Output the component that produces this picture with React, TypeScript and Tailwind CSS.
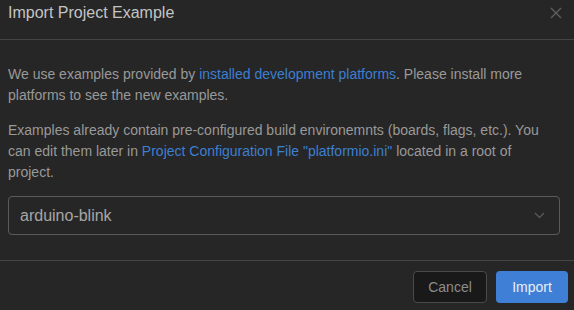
import React from "react";

export default function App() {
  return (
    <div
      className="w-[574px] h-[310px] bg-[#262626] overflow-hidden flex flex-col"
      style={{ fontFamily: '"Liberation Sans", Arial, sans-serif' }}
    >
      <div className="h-10 shrink-0 flex items-start justify-between border-b border-[#444444]">
        <div className="pl-2 pt-[1px] text-[16px] leading-6 text-[#c4c4c4]">Import Project Example</div>
        <div className="pr-[12px] pt-[7px]">
          <svg width="12" height="12" viewBox="0 0 12 12" fill="none">
            <path d="M1 1 L11 11 M11 1 L1 11" stroke="#5f5f5f" strokeWidth="1.4" />
          </svg>
        </div>
      </div>
      <div className="px-2 pt-[24px] pb-[25px] text-[14px] leading-[21px] text-[#999999] border-b border-[#444444]">
        <p className="mb-[14px] pr-[20px]">
          We use examples provided by{" "}
          <span className="text-[#3d7fd1]">installed development platforms</span>. Please install more
          platforms to see the new examples.
        </p>
        <p className="pr-[20px]">
          Examples already contain pre-configured build environemnts (boards, flags, etc.). You can edit
          them later in{" "}
          <span className="text-[#3d7fd1]">Project Configuration File "platformio.ini"</span> located in a
          root of project.
        </p>
        <div className="mt-[13px] h-[39px] w-[552px] rounded-[4px] border border-[#5a5a5a] flex items-center justify-between pl-[11px] pr-[14px]">
          <span className="text-[16px] text-[#a6a6a6]">arduino-blink</span>
          <svg width="11" height="7" viewBox="0 0 11 7" fill="none">
            <path d="M1 1 L5.5 5.5 L10 1" stroke="#5c5c5c" strokeWidth="1.2" />
          </svg>
        </div>
      </div>
      <div className="flex justify-end gap-[9px] pt-[10px] pr-[6px]">
        <button className="w-[74px] h-[32px] rounded-[4px] bg-[#191919] border border-[#4a4a4a] text-[14px] text-[#8c8c8c]">
          Cancel
        </button>
        <button className="w-[72px] h-[32px] rounded-[4px] bg-[#3f80d6] text-[14px] text-[#e8eef7]">
          Import
        </button>
      </div>
    </div>
  );
}
